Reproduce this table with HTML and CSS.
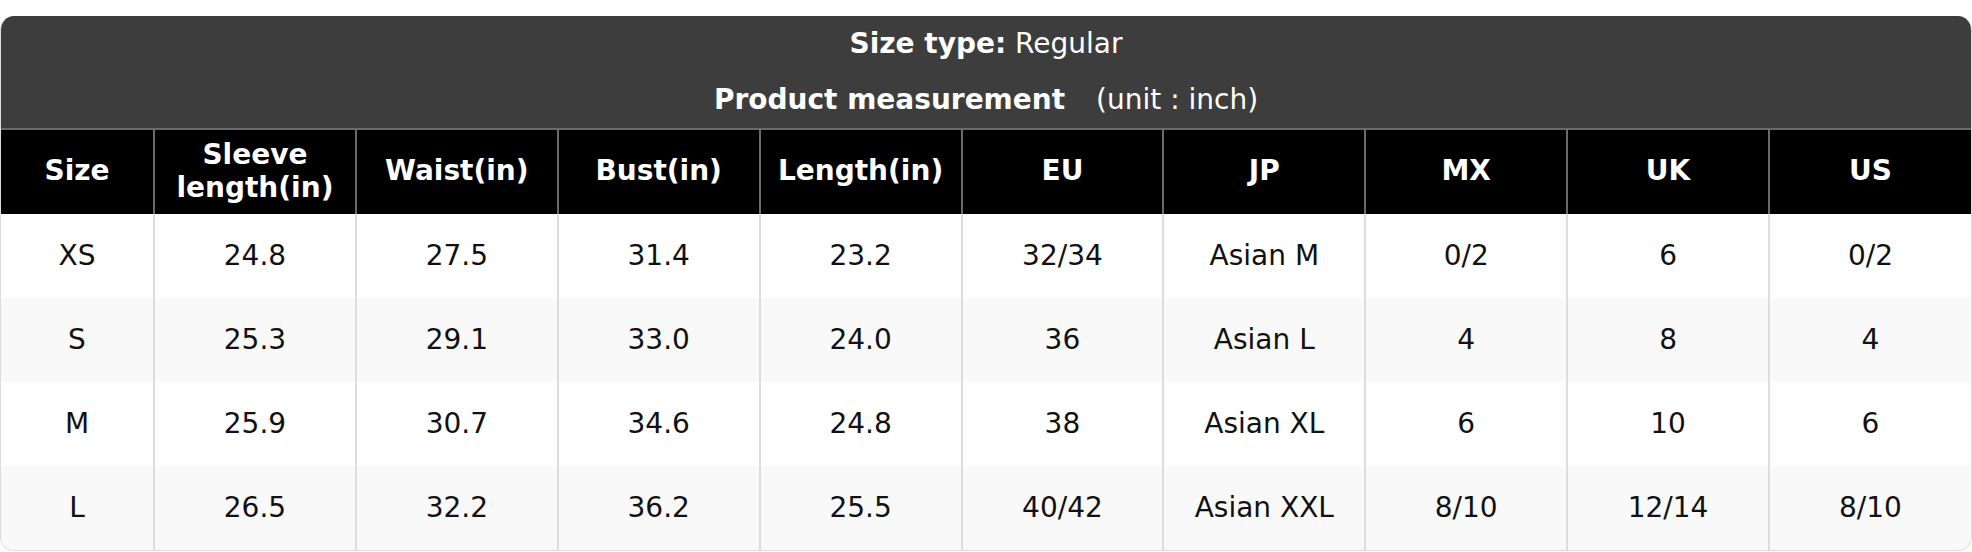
FILE: index.html
```html
<!DOCTYPE html>
<html>
<head>
<meta charset="utf-8">
<link rel="stylesheet" href="styles.css">
</head>
<body>
<div class="chart">
  <div class="chart-head">
    <div class="head-line"><strong>Size type:</strong> Regular</div>
    <div class="head-line"><strong>Product measurement</strong><span class="unit">(unit : inch)</span></div>
  </div>
  <table class="size-table">
    <colgroup>
      <col class="col-size">
      <col><col><col><col><col><col><col><col><col>
    </colgroup>
    <thead>
      <tr>
        <th>Size</th>
        <th>Sleeve length(in)</th>
        <th>Waist(in)</th>
        <th>Bust(in)</th>
        <th>Length(in)</th>
        <th>EU</th>
        <th>JP</th>
        <th>MX</th>
        <th>UK</th>
        <th>US</th>
      </tr>
    </thead>
    <tbody>
      <tr>
        <td>XS</td><td>24.8</td><td>27.5</td><td>31.4</td><td>23.2</td><td>32/34</td><td>Asian M</td><td>0/2</td><td>6</td><td>0/2</td>
      </tr>
      <tr>
        <td>S</td><td>25.3</td><td>29.1</td><td>33.0</td><td>24.0</td><td>36</td><td>Asian L</td><td>4</td><td>8</td><td>4</td>
      </tr>
      <tr>
        <td>M</td><td>25.9</td><td>30.7</td><td>34.6</td><td>24.8</td><td>38</td><td>Asian XL</td><td>6</td><td>10</td><td>6</td>
      </tr>
      <tr>
        <td>L</td><td>26.5</td><td>32.2</td><td>36.2</td><td>25.5</td><td>40/42</td><td>Asian XXL</td><td>8/10</td><td>12/14</td><td>8/10</td>
      </tr>
    </tbody>
  </table>
</div>
</body>
</html>
```
FILE: styles.css
```css
html, body {
  margin: 0;
  padding: 0;
  background: #ffffff;
}

body {
  padding-top: 16px;
  font-family: "DejaVu Sans", Verdana, sans-serif;
  font-size: 28px;
}

.chart {
  width: 1972px;
  box-sizing: border-box;
  border: 1px solid #dcdcdc;
  border-top: none;
  border-radius: 14px;
  overflow: hidden;
}

.chart-head {
  background: #3d3d3d;
  color: #ffffff;
  text-align: center;
}

.head-line {
  height: 56px;
  line-height: 56px;
  white-space: nowrap;
}

.head-line strong {
  font-weight: bold;
}

.unit {
  margin-left: 31px;
}

.size-table {
  width: 100%;
  border-collapse: collapse;
  table-layout: fixed;
}

.col-size {
  width: 153px;
}

.size-table th {
  background: #000000;
  color: #ffffff;
  font-weight: bold;
  line-height: 32.5px;
  padding: 9px 4px 10px;
  border-top: 2px solid #6a6a6a;
  border-left: 2px solid #6a6a6a;
  border-right: 2px solid #6a6a6a;
  border-bottom: none;
  vertical-align: middle;
  text-align: center;
}

.size-table td {
  height: 84px;
  padding: 0 6px;
  color: #111111;
  text-align: center;
  vertical-align: middle;
  border-left: 2px solid #dddddd;
  border-right: 2px solid #dddddd;
  line-height: 32px;
}

.size-table th:first-child,
.size-table td:first-child {
  border-left: none;
}

.size-table th:last-child,
.size-table td:last-child {
  border-right: none;
}

.size-table tbody tr:nth-child(even) td {
  background: #f9f9f9;
}
```
